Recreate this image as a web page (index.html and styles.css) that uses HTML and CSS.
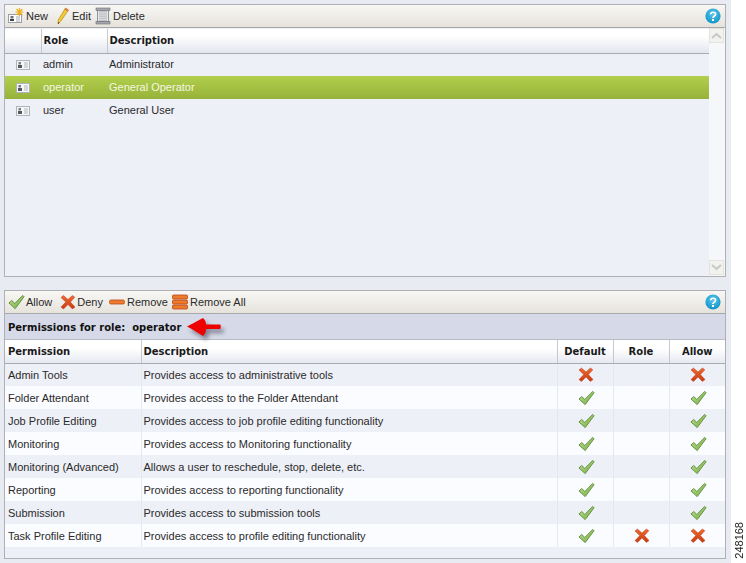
FILE: index.html
```html
<!DOCTYPE html>
<html lang="en">
<head>
  <meta charset="UTF-8">
  <title>Roles and Permissions</title>
  <link rel="stylesheet" href="styles.css">
</head>
<body>
  <svg class="defs" width="0" height="0">
    <defs>
      <linearGradient id="checkFill" x1="0" y1="0" x2="1" y2="1">
        <stop offset="0" stop-color="#c4e59a"/>
        <stop offset="1" stop-color="#6fa63c"/>
      </linearGradient>
      <linearGradient id="crossFill" x1="0" y1="0" x2="0" y2="1">
        <stop offset="0" stop-color="#ee6a2c"/>
        <stop offset="1" stop-color="#c83a14"/>
      </linearGradient>
      <radialGradient id="helpFill" cx="0.5" cy="0.35" r="0.7">
        <stop offset="0" stop-color="#5cc8ea"/>
        <stop offset="1" stop-color="#0a8fc6"/>
      </radialGradient>
      <symbol id="check" viewBox="0 0 18 16">
        <path d="M1 9l3-2.600 3.200 3.200L15.600 1 17 2.400 7.600 15z" fill="url(#checkFill)" stroke="#5f8f3a" stroke-width="1"/>
      </symbol>
      <symbol id="cross" viewBox="0 0 16 15">
        <path d="M1 3l2.400-2L8 5l4.400-4 2.400 1.800L10.400 7.600l4.600 5-2.600 1.800L8 10l-4.600 4.600L1 12.600l4.800-5z" fill="url(#crossFill)" stroke="#b8401c" stroke-width=".5"/>
      </symbol>
      <symbol id="card" viewBox="0 0 14 10">
        <rect x=".5" y=".5" width="13" height="9" fill="#f6f6f8" stroke="#b0b3ba"/>
        <rect x="2.500" y="2" width="2.500" height="2.500" fill="#7a7e86"/>
        <rect x="2" y="5" width="4" height="3" fill="#55585f"/>
        <path d="M8 3h4M8 5h4M8 7h4" stroke="#b4b7be"/>
      </symbol>
      <symbol id="help" viewBox="0 0 16 16">
        <circle cx="8" cy="8" r="7.600" fill="url(#helpFill)"/>
        <path d="M5.600 6.200C5.800 3.600 10.600 3.600 10.600 6.200 10.600 8 8 8 8 10" fill="none" stroke="#fff" stroke-width="1.700"/>
        <rect x="7" y="11" width="2" height="2" fill="#fff"/>
      </symbol>
    </defs>
  </svg>

  <div class="page">
    <div class="panel panel-roles">
      <div class="toolbar">
        <span class="tool">
          <svg class="ico" width="16" height="16" viewBox="0 0 16 16">
            <rect x=".5" y="6.500" width="13" height="8" fill="#fff" stroke="#9a9ea6"/>
            <rect x="2.500" y="8" width="3" height="2.500" fill="#6c7078"/>
            <rect x="2" y="11" width="4" height="2" fill="#3e4046"/>
            <path d="M8 9h4M8 11h4M8 13h4" stroke="#a4a8b0"/>
            <path d="M11.500 0v8M7.500 4h8M8.500 1l6 6M14.500 1l-6 6" stroke="#f0b020" stroke-width="1.200"/>
          </svg>New
        </span>
        <span class="tool">
          <svg class="ico" width="18" height="18" viewBox="0 0 18 18">
            <path d="M13.500 1l3 2-8 11.500L6 17l.3-4z" fill="#f6c93a" stroke="#b8901c" stroke-width=".8"/>
            <path d="M13.500 1l3 2-1 1.500-3-2z" fill="#e07a50"/>
            <path d="M6.200 15l1.300 .9L6 17z" fill="#333"/>
          </svg>Edit
        </span>
        <span class="tool">
          <svg class="ico" width="16" height="18" viewBox="0 0 16 18">
            <rect x="1" y="1" width="14" height="2.500" fill="#a4a7ac" stroke="#6a6d73" stroke-width=".6"/>
            <rect x="2.500" y="3.500" width="11" height="11" fill="#e6e7ea" stroke="#7b7e84" stroke-width=".8"/>
            <path d="M5 4v10M7 4v10M9 4v10M11 4v10" stroke="#8a8d93" stroke-width=".8" stroke-dasharray="1.500 .7"/>
            <rect x="1" y="14.500" width="14" height="2.500" fill="#a4a7ac" stroke="#6a6d73" stroke-width=".6"/>
          </svg>Delete
        </span>
        <svg class="help"><use href="#help"/></svg>
      </div>
      <div class="roles-body">
        <div class="roles-main">
          <table class="grid roles">
            <colgroup><col class="c-ico"><col class="c-role"><col></colgroup>
            <thead>
              <tr><th></th><th>Role</th><th>Description</th></tr>
            </thead>
            <tbody>
              <tr><td class="ic"><svg class="card"><use href="#card"/></svg></td><td>admin</td><td>Administrator</td></tr>
              <tr class="sel"><td class="ic"><svg class="card"><use href="#card"/></svg></td><td>operator</td><td>General Operator</td></tr>
              <tr><td class="ic"><svg class="card"><use href="#card"/></svg></td><td>user</td><td>General User</td></tr>
            </tbody>
          </table>
        </div>
        <div class="scroll">
          <span class="scroll-btn"><svg width="11" height="7" viewBox="0 0 11 7"><path d="M1 6l4.500-4L10 6" fill="none" stroke="#c4c8c8" stroke-width="2"/></svg></span>
          <span class="scroll-btn"><svg width="11" height="7" viewBox="0 0 11 7"><path d="M1 1l4.500 4L10 1" fill="none" stroke="#c4c8c8" stroke-width="2"/></svg></span>
        </div>
      </div>
    </div>

    <div class="panel panel-perms">
      <div class="toolbar wide">
        <span class="tool tight">
          <svg class="ico" width="17" height="16"><use href="#check"/></svg>Allow
        </span>
        <span class="tool tight">
          <svg class="ico" width="18" height="16" viewBox="-2 0 18 16"><use href="#cross" width="16" height="15" y=".5"/></svg>Deny
        </span>
        <span class="tool tight">
          <svg class="ico" width="17" height="16" viewBox="0 0 17 16"><rect x=".5" y="6" width="15" height="4" rx="1.500" fill="#ee7a2c" stroke="#b8481c" stroke-width=".8"/></svg>Remove
        </span>
        <span class="tool tight last">
          <svg class="ico" width="17" height="16" viewBox="0 0 17 16">
            <rect x=".5" y="1" width="15" height="4" rx="1" fill="#ee7a2c" stroke="#b8481c" stroke-width=".8"/>
            <rect x=".5" y="6" width="15" height="4" rx="1" fill="#ee7a2c" stroke="#b8481c" stroke-width=".8"/>
            <rect x=".5" y="11" width="15" height="4" rx="1" fill="#ee7a2c" stroke="#b8481c" stroke-width=".8"/>
          </svg>Remove All
        </span>
        <svg class="help"><use href="#help"/></svg>
      </div>
      <div class="caption">
        <span>Permissions for role:&nbsp; operator</span>
        <svg class="arrow" width="36" height="20" viewBox="0 0 36 20">
          <path d="M1 9.500C6 7 11 4 17 1c2 2 3 4 3 6.500h14c1 0 1 4.500 0 4.500H20c0 3-1 5-3 7C11 15 6 12 1 9.500z" fill="#ee0000"/>
        </svg>
      </div>
      <table class="grid perms">
        <colgroup><col class="c-perm"><col><col class="c-flag"><col class="c-flag"><col class="c-flag"></colgroup>
        <thead>
          <tr><th>Permission</th><th>Description</th><th class="mid">Default</th><th class="mid">Role</th><th class="mid">Allow</th></tr>
        </thead>
        <tbody>
          <tr><td>Admin Tools</td><td>Provides access to administrative tools</td><td class="mid"><svg class="x"><use href="#cross"/></svg></td><td></td><td class="mid"><svg class="x"><use href="#cross"/></svg></td></tr>
          <tr><td>Folder Attendant</td><td>Provides access to the Folder Attendant</td><td class="mid"><svg class="ok"><use href="#check"/></svg></td><td></td><td class="mid"><svg class="ok"><use href="#check"/></svg></td></tr>
          <tr><td>Job Profile Editing</td><td>Provides access to job profile editing functionality</td><td class="mid"><svg class="ok"><use href="#check"/></svg></td><td></td><td class="mid"><svg class="ok"><use href="#check"/></svg></td></tr>
          <tr><td>Monitoring</td><td>Provides access to Monitoring functionality</td><td class="mid"><svg class="ok"><use href="#check"/></svg></td><td></td><td class="mid"><svg class="ok"><use href="#check"/></svg></td></tr>
          <tr><td>Monitoring (Advanced)</td><td>Allows a user to reschedule, stop, delete, etc.</td><td class="mid"><svg class="ok"><use href="#check"/></svg></td><td></td><td class="mid"><svg class="ok"><use href="#check"/></svg></td></tr>
          <tr><td>Reporting</td><td>Provides access to reporting functionality</td><td class="mid"><svg class="ok"><use href="#check"/></svg></td><td></td><td class="mid"><svg class="ok"><use href="#check"/></svg></td></tr>
          <tr><td>Submission</td><td>Provides access to submission tools</td><td class="mid"><svg class="ok"><use href="#check"/></svg></td><td></td><td class="mid"><svg class="ok"><use href="#check"/></svg></td></tr>
          <tr><td>Task Profile Editing</td><td>Provides access to profile editing functionality</td><td class="mid"><svg class="ok"><use href="#check"/></svg></td><td class="mid"><svg class="x"><use href="#cross"/></svg></td><td class="mid"><svg class="x"><use href="#cross"/></svg></td></tr>
        </tbody>
      </table>
    </div>
  </div>

  <div class="figure-id">248168</div>
</body>
</html>
```

FILE: styles.css
```css
* { margin: 0; padding: 0; box-sizing: border-box; }
html { background: #fff; }
body {
  display: flex;
  width: 746px;
  height: 563px;
  overflow: hidden;
  background: #fff;
  font-family: "Liberation Sans", Arial, sans-serif;
  font-size: 11px;
  color: #2a2a2a;
}
.defs { position: absolute; }
.page {
  flex: none;
  width: 731px;
  height: 563px;
  padding: 4px 5px 0 4px;
  background: #e9ebf3;
}
.panel {
  border: 1px solid #aeb0b6;
  background: #eef0f8;
}
.panel-roles { height: 273px; }
.panel-perms { height: 269px; margin-top: 13px; }

.toolbar {
  display: flex;
  align-items: center;
  gap: 4px;
  height: 23px;
  padding-left: 3px;
  background: linear-gradient(#f8f7f4, #e6e3dc);
  border-bottom: 1px solid #a8a8a8;
}
.toolbar.wide { gap: 6px; }
.tool { display: flex; align-items: center; gap: 2px; }
.tool.tight { gap: 1px; }
.tool.last { margin-left: -2px; }
.ico { flex: none; }
.help { width: 16px; height: 16px; margin-left: auto; margin-right: 4px; }

.roles-body { display: flex; height: 248px; }
.roles-main { flex: 1; min-width: 0; padding-top: 1px; }
.scroll {
  width: 16px;
  display: flex;
  flex-direction: column;
  justify-content: space-between;
  background: #f6f7fb;
  padding-bottom: 1px;
}
.scroll-btn {
  width: 15px;
  height: 15px;
  display: flex;
  align-items: center;
  justify-content: center;
  background: #f2f3ee;
  border: 1px solid #e2e3dc;
}

.grid { width: 100%; border-collapse: collapse; table-layout: fixed; }
.grid th {
  height: 23px;
  padding: 0 2px;
  text-align: left;
  font-family: "DejaVu Sans", sans-serif;
  font-size: 10px;
  font-weight: bold;
  color: #1a1a1a;
  background: linear-gradient(#fff 30%, #e2e5ef);
  border-bottom: 1px solid #a9abb3;
  border-right: 1px solid #c6c8d0;
}
.grid th:last-child { border-right: none; }
.grid td { height: 23px; padding: 0 2px; white-space: nowrap; }

.roles .c-ico { width: 36px; }
.roles .c-role { width: 66px; }
.roles th { height: 24px; }
.roles td { padding-bottom: 2px; }
.roles .ic { text-align: center; padding: 0; }
.roles .sel td { background: linear-gradient(#b1cf4c, #97b23a); color: #f4f8e2; }
.card { width: 14px; height: 10px; display: block; margin: 0 auto; }

.caption {
  display: flex;
  align-items: center;
  gap: 5px;
  height: 26px;
  padding: 1px 0 0 3px;
  background: #d6d9e7;
  border-bottom: 1px solid #b8bac4;
  font-family: "DejaVu Sans", sans-serif;
  font-size: 10px;
  font-weight: bold;
  color: #111;
}
.arrow {
  flex: none;
  overflow: visible;
  filter: drop-shadow(3px 4px 2px rgba(60, 60, 80, .55));
}

.perms { background: #fff; }
.perms .c-perm { width: 136px; }
.perms .c-flag { width: 56px; }
.perms th { background: linear-gradient(#fff 35%, #e6e9f2); }
.perms th:first-child, .perms td:first-child { padding-left: 3px; }
.perms th.mid { text-align: center; }
.perms td { border-right: 1px solid #e6e8f0; background: #fbfcff; }
.perms td:last-child { border-right: none; }
.perms tbody tr:nth-child(odd) td { background: #eef0f7; }
.perms td.mid { padding: 0 0 0 2px; }
.ok, .x { display: block; margin: 0 auto; }
.ok { width: 17px; height: 16px; }
.x { width: 16px; height: 15px; }

.figure-id {
  align-self: flex-end;
  width: 12px;
  margin: 0 0 4px 2px;
  writing-mode: vertical-rl;
  transform: rotate(180deg);
  line-height: 12px;
  color: #222;
}
```
